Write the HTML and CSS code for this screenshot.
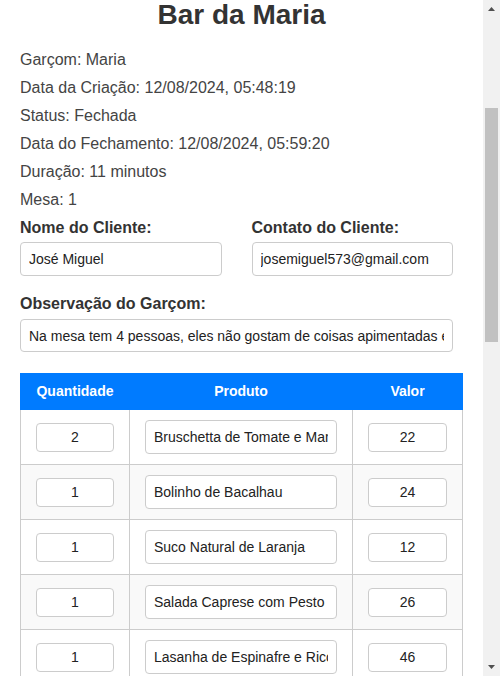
FILE: index.html
```html
<!DOCTYPE html>
<html lang="pt-BR">
<head>
<meta charset="UTF-8">
<title>Bar da Maria</title>
<link rel="stylesheet" href="styles.css">
</head>
<body>
<div class="window">
  <main class="page">
    <h1 class="title">Bar da Maria</h1>
    <section class="info">
      <p>Garçom: Maria</p>
      <p>Data da Criação: 12/08/2024, 05:48:19</p>
      <p>Status: Fechada</p>
      <p>Data do Fechamento: 12/08/2024, 05:59:20</p>
      <p>Duração: 11 minutos</p>
      <p>Mesa: 1</p>
    </section>
    <section class="client-grid">
      <div class="field">
        <label class="label">Nome do Cliente:</label>
        <input class="text-input" type="text" value="José Miguel">
      </div>
      <div class="field">
        <label class="label">Contato do Cliente:</label>
        <input class="text-input" type="text" value="josemiguel573@gmail.com">
      </div>
    </section>
    <div class="field obs">
      <label class="label">Observação do Garçom:</label>
      <input class="text-input" type="text" value="Na mesa tem 4 pessoas, eles não gostam de coisas apimentadas e preferem bebidas sem gelo.">
    </div>
    <table class="items">
      <colgroup>
        <col class="c-qty"><col class="c-prod"><col class="c-val">
      </colgroup>
      <thead>
        <tr><th>Quantidade</th><th>Produto</th><th>Valor</th></tr>
      </thead>
      <tbody>
        <tr><td><input class="small-input" value="2"></td><td><input class="prod-input" value="Bruschetta de Tomate e Manjericão"></td><td><input class="small-input" value="22"></td></tr>
        <tr><td><input class="small-input" value="1"></td><td><input class="prod-input" value="Bolinho de Bacalhau"></td><td><input class="small-input" value="24"></td></tr>
        <tr><td><input class="small-input" value="1"></td><td><input class="prod-input" value="Suco Natural de Laranja"></td><td><input class="small-input" value="12"></td></tr>
        <tr><td><input class="small-input" value="1"></td><td><input class="prod-input" value="Salada Caprese com Pesto"></td><td><input class="small-input" value="26"></td></tr>
        <tr><td><input class="small-input" value="1"></td><td><input class="prod-input" value="Lasanha de Espinafre e Ricota"></td><td><input class="small-input" value="46"></td></tr>
        <tr><td><input class="small-input" value="2"></td><td><input class="prod-input" value="Refrigerante Lata"></td><td><input class="small-input" value="14"></td></tr>
      </tbody>
    </table>
  </main>
  <div class="scrollbar" aria-hidden="true">
    <div class="sb-button">
      <svg width="17" height="17" viewBox="0 0 17 17"><polygon points="5,11 12,11 8.5,7" fill="#505050"/></svg>
    </div>
    <div class="sb-track">
      <div class="sb-thumb"></div>
    </div>
    <div class="sb-button">
      <svg width="17" height="17" viewBox="0 0 17 17"><polygon points="5,6 12,6 8.5,10" fill="#505050"/></svg>
    </div>
  </div>
</div>
</body>
</html>
```

FILE: styles.css
```css
html, body {
  margin: 0;
  padding: 0;
  height: 100%;
  overflow: hidden;
}

body {
  font-family: "Liberation Sans", Arial, sans-serif;
  color: #333;
  background: #fff;
}

.window {
  display: flex;
  height: 100vh;
  overflow: hidden;
}

.page {
  flex: 1;
  min-width: 0;
  padding: 0 20px;
  overflow: hidden;
}

.title {
  margin: 0;
  text-align: center;
  font-size: 28px;
  line-height: 30px;
  font-weight: bold;
  color: #333;
}

.info {
  margin-top: 16px;
}

.info p {
  margin: 0;
  font-size: 16px;
  line-height: 28px;
  color: #444;
}

.client-grid {
  display: grid;
  grid-template-columns: 1fr 1fr;
  column-gap: 20px;
  margin-top: 5px;
}

.field {
  display: flex;
  flex-direction: column;
  gap: 5px;
}

.obs {
  margin-top: 19px;
  gap: 6px;
}

.label {
  font-size: 16px;
  line-height: 18px;
  font-weight: bold;
  color: #333;
}

.text-input {
  width: calc(100% - 10px);
  box-sizing: border-box;
  height: 34px;
  padding: 0 8px;
  border: 1px solid #ccc;
  border-radius: 4px;
  font-family: "Liberation Sans", Arial, sans-serif;
  font-size: 14px;
  color: #222;
  background: #fff;
}

.obs .text-input {
  height: 33px;
}

.items {
  margin-top: 21px;
  width: 100%;
  border-collapse: collapse;
  table-layout: fixed;
}

.c-qty { width: 109px; }
.c-val { width: 110px; }

.items th {
  background: #007bff;
  color: #fff;
  font-size: 14px;
  font-weight: bold;
  line-height: 15px;
  padding: 10px;
  border: 1px solid #007bff;
  text-align: center;
}

.items td {
  border: 1px solid #ccc;
  padding: 10px 15px;
  text-align: center;
  vertical-align: middle;
  background: #fff;
}

.items tbody tr:nth-child(even) td {
  background: #f9f9f9;
}

.small-input,
.prod-input {
  display: block;
  width: 100%;
  box-sizing: border-box;
  border: 1px solid #ccc;
  border-radius: 4px;
  font-family: "Liberation Sans", Arial, sans-serif;
  font-size: 14px;
  color: #222;
  background: #fff;
}

.small-input {
  height: 29px;
  padding: 0 4px;
  text-align: center;
}

.prod-input {
  height: 34px;
  padding: 0 8px;
  text-align: left;
}

.scrollbar {
  flex: 0 0 17px;
  width: 17px;
  display: flex;
  flex-direction: column;
  background: #f1f1f1;
}

.sb-button {
  height: 17px;
  flex: 0 0 17px;
}

.sb-button svg {
  display: block;
}

.sb-track {
  flex: 1;
  padding: 91px 2px 0;
}

.sb-thumb {
  height: 234px;
  background: #c1c1c1;
}
```
